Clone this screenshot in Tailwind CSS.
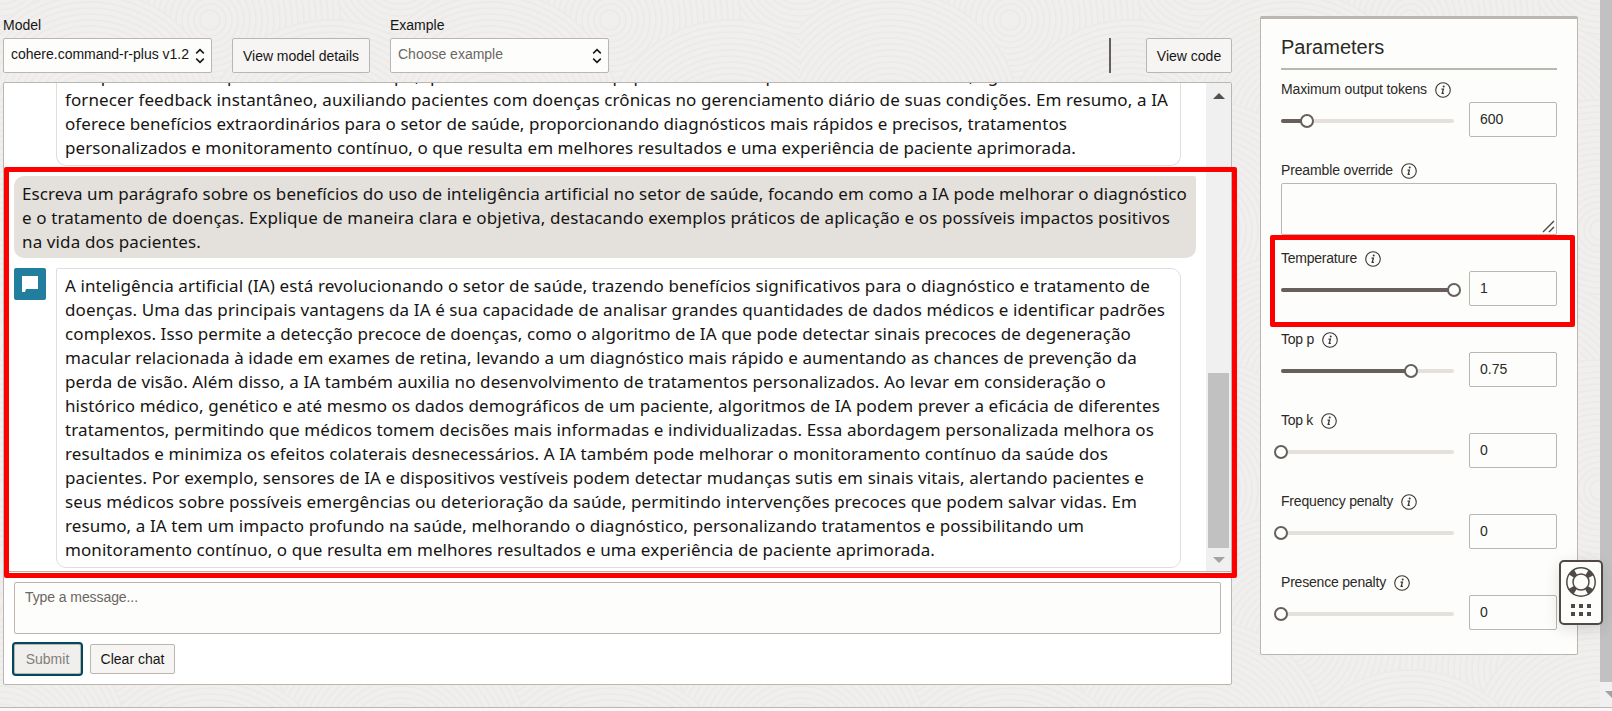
<!DOCTYPE html>
<html lang="pt">
<head>
<meta charset="utf-8">
<title>Playground</title>
<script src="https://cdn.jsdelivr.net/npm/@tailwindcss/browser@4"></script>
</head>
<body class="relative h-[711px] w-[1612px] overflow-hidden bg-[#efeeec] font-['Liberation_Sans',Arial,sans-serif] text-[14px] leading-4 text-[#161513]">
<svg class="absolute inset-0" width="1612" height="707" aria-hidden="true">
  <defs>
    <g id="rings" fill="#f0efed" stroke="#ebeae8" stroke-width="1.6">
      <circle r="130"/><circle r="124"/><circle r="118"/><circle r="112"/><circle r="106"/><circle r="100"/><circle r="94"/><circle r="88"/><circle r="82"/><circle r="76"/><circle r="70"/><circle r="64"/><circle r="58"/><circle r="52"/><circle r="46"/><circle r="40"/><circle r="34"/><circle r="28"/><circle r="22"/><circle r="16"/><circle r="10"/>
    </g>
    <pattern id="waves" width="400" height="260" patternUnits="userSpaceOnUse">
      <rect width="400" height="260" fill="#f0efed"/>
      <use href="#rings" x="0" y="-30"/><use href="#rings" x="400" y="-30"/><use href="#rings" x="210" y="20"/><use href="#rings" x="90" y="120"/><use href="#rings" x="330" y="150"/><use href="#rings" x="0" y="230"/><use href="#rings" x="400" y="230"/><use href="#rings" x="210" y="280"/>
    </pattern>
  </defs>
  <rect width="1612" height="707" fill="url(#waves)"/>
</svg>
<svg class="hidden">
  <symbol id="info" viewBox="0 0 16 16"><circle cx="8" cy="8" r="7.3" fill="none" stroke="#3a3632" stroke-width="1.1"/><circle cx="8.7" cy="4.6" r="1" fill="#3a3632"/><path d="M6.5 7.1h1.9L7.2 11.4h1.7" fill="none" stroke="#3a3632" stroke-width="1.3"/></symbol>
  <symbol id="updown" viewBox="0 0 10 16"><path d="M1.2 5.4 5 1.6l3.8 3.8M1.2 10.6 5 14.4l3.8-3.8" fill="none" stroke="#161513" stroke-width="1.5"/></symbol>
</svg>

<div class="relative flex h-[708px] border-b border-[#bcb6b1]">
  <main class="ml-[3px] mt-4 flex w-[1229px] flex-col">
    <div class="flex h-[57px] items-end">
      <div class="w-[209px]"><div class="mb-[5px]">Model</div>
        <div class="flex h-[35px] items-center justify-between rounded-[2px] border border-[#bcb6b1] bg-[#fdfdfb] pl-[7px] pr-[6px]"><span data-w="178" class="-mt-1 whitespace-nowrap">cohere.command-r-plus v1.2</span><svg width="10" height="16"><use href="#updown"/></svg></div></div>
      <div class="ml-5 flex h-[35px] w-[138px] items-center justify-center rounded-[2px] border border-[#bcb6b1] bg-[#f6f5f3]"><span data-w="116" class="whitespace-nowrap">View model details</span></div>
      <div class="ml-5 w-[219px]"><div class="mb-[5px]">Example</div>
        <div class="flex h-[35px] items-center justify-between rounded-[2px] border border-[#bcb6b1] bg-[#fdfdfb] pl-[7px] pr-[6px] text-[#6b6764]"><span data-w="105" class="-mt-1 whitespace-nowrap">Choose example</span><svg width="10" height="16"><use href="#updown"/></svg></div></div>
      <div class="ml-auto h-[35px] w-[2px] bg-[#665f5b]"></div>
      <div class="ml-[35px] flex h-[35px] w-[86px] items-center justify-center rounded-[2px] border border-[#bcb6b1] bg-[#f6f5f3]">View code</div>
    </div>

    <section class="mt-[9px] flex h-[603px] flex-col rounded-[2px] border border-[#bcb6b1] bg-white">
      <div class="flex h-[489px] overflow-hidden border-b border-[#bcb6b1]">
        <div class="flex w-[1202px] flex-col pl-[10px] font-['Noto_Sans',sans-serif] text-[17px] leading-6">
          <div class="ml-[42px] flex h-[83px] w-[1125px] flex-col justify-end rounded-b-[10px] border border-t-0 border-[#e0dedc] pb-[5px] pl-2">
            <p data-w="994" class="w-max whitespace-nowrap">Os aplicativos da IA podem atuar no tempo, que em todos os casos populares dos campos e nos dados remotos, agindo ao</p>
            <p data-w="1103" class="w-max whitespace-nowrap">fornecer feedback instantâneo, auxiliando pacientes com doenças crônicas no gerenciamento diário de suas condições. Em resumo, a IA</p>
            <p data-w="1002" class="w-max whitespace-nowrap">oferece benefícios extraordinários para o setor de saúde, proporcionando diagnósticos mais rápidos e precisos, tratamentos</p>
            <p data-w="1011" class="w-max whitespace-nowrap">personalizados e monitoramento contínuo, o que resulta em melhores resultados e uma experiência de paciente aprimorada.</p>
          </div>
          <div class="mt-[10px] h-[82px] w-[1182px] rounded-[10px] rounded-tr-[2px] bg-[#e4e1dd] pl-2 pt-[6px]">
            <p data-w="1165" class="w-max whitespace-nowrap">Escreva um parágrafo sobre os benefícios do uso de inteligência artificial no setor de saúde, focando em como a IA pode melhorar o diagnóstico</p>
            <p data-w="1148" class="w-max whitespace-nowrap">e o tratamento de doenças. Explique de maneira clara e objetiva, destacando exemplos práticos de aplicação e os possíveis impactos positivos</p>
            <p data-w="179" class="w-max whitespace-nowrap">na vida dos pacientes.</p>
          </div>
          <div class="mt-[10px] flex">
            <div class="flex h-8 w-8 items-center justify-center rounded-[2px] bg-[#227e9e]"><svg width="18" height="18"><path d="M1 1h16v13H5l-1 3H1z" fill="#fff"/></svg></div>
            <div class="ml-[10px] h-[300px] w-[1125px] rounded-[10px] rounded-tl-[2px] border border-[#e0dedc] pl-2 pt-[5px]">
              <p data-w="1085" class="w-max whitespace-nowrap">A inteligência artificial (IA) está revolucionando o setor de saúde, trazendo benefícios significativos para o diagnóstico e tratamento de</p>
              <p data-w="1100" class="w-max whitespace-nowrap">doenças. Uma das principais vantagens da IA é sua capacidade de analisar grandes quantidades de dados médicos e identificar padrões</p>
              <p data-w="1066" class="w-max whitespace-nowrap">complexos. Isso permite a detecção precoce de doenças, como o algoritmo de IA que pode detectar sinais precoces de degeneração</p>
              <p data-w="1072" class="w-max whitespace-nowrap">macular relacionada à idade em exames de retina, levando a um diagnóstico mais rápido e aumentando as chances de prevenção da</p>
              <p data-w="1041" class="w-max whitespace-nowrap">perda de visão. Além disso, a IA também auxilia no desenvolvimento de tratamentos personalizados. Ao levar em consideração o</p>
              <p data-w="1095" class="w-max whitespace-nowrap">histórico médico, genético e até mesmo os dados demográficos de um paciente, algoritmos de IA podem prever a eficácia de diferentes</p>
              <p data-w="1089" class="w-max whitespace-nowrap">tratamentos, permitindo que médicos tomem decisões mais informadas e individualizadas. Essa abordagem personalizada melhora os</p>
              <p data-w="1043" class="w-max whitespace-nowrap">resultados e minimiza os efeitos colaterais desnecessários. A IA também pode melhorar o monitoramento contínuo da saúde dos</p>
              <p data-w="1079" class="w-max whitespace-nowrap">pacientes. Por exemplo, sensores de IA e dispositivos vestíveis podem detectar mudanças sutis em sinais vitais, alertando pacientes e</p>
              <p data-w="1072" class="w-max whitespace-nowrap">seus médicos sobre possíveis emergências ou deterioração da saúde, permitindo intervenções precoces que podem salvar vidas. Em</p>
              <p data-w="1019" class="w-max whitespace-nowrap">resumo, a IA tem um impacto profundo na saúde, melhorando o diagnóstico, personalizando tratamentos e possibilitando um</p>
              <p data-w="870" class="w-max whitespace-nowrap">monitoramento contínuo, o que resulta em melhores resultados e uma experiência de paciente aprimorada.</p>
            </div>
          </div>
        </div>
        <div class="flex w-[25px] flex-col items-center bg-[#f0f0f0] pb-[8px] pt-[10px]">
          <svg width="12" height="6"><path d="M0 6 6 0l6 6z" fill="#505050"/></svg>
          <div class="mt-auto h-[175px] w-[21px] bg-[#c1c1c1]"></div>
          <svg class="mt-[9px]" width="12" height="6"><path d="M0 0h12L6 6z" fill="#a3a3a3"/></svg>
        </div>
      </div>
      <div class="ml-[10px] mt-[10px] h-[52px] w-[1207px] rounded-[2px] border border-[#bcb6b1] bg-[#fdfdfb] pl-[10px] pt-[6px] text-[#6b6764]"><span data-w="113" class="whitespace-nowrap">Type a message...</span></div>
      <div class="ml-[10px] mt-[10px] flex">
        <div class="flex h-[30px] w-[67px] items-center justify-center rounded-[2px] border border-[#bcb6b1] bg-[#f1efed] text-[#827e7b] outline-2 outline-[#00485e]">Submit</div>
        <div class="ml-[9px] flex h-[30px] w-[85px] items-center justify-center rounded-[2px] border border-[#bcb6b1] bg-[#f6f5f3]">Clear chat</div>
      </div>
    </section>
  </main>

  <aside class="ml-7 mt-4 h-[639px] w-[318px] rounded-[2px] border border-t-[3px] border-[#bcb6b1] bg-[#fdfdfb] px-5 pt-[16px] text-[#2b2926]">
    <h2 class="h-[35px] border-b-2 border-[#bcb6b1] text-[20px] leading-6">Parameters</h2>
    <div class="mt-[11px] h-[81px]">
      <div class="flex h-4 items-center gap-2"><span data-w="146" class="whitespace-nowrap">Maximum output tokens</span><svg class="mt-px" width="16" height="16"><use href="#info"/></svg></div>
      <div class="mt-[5px] flex h-[35px] items-center justify-between"><div class="relative mt-[3px] h-1 w-[173px] rounded bg-[#e4e1dd]"><div class="h-1 rounded bg-[#665f5b]" style="width:15%"></div><div class="absolute -top-[5px] -ml-[7px] h-[14px] w-[14px] rounded-full border-2 border-[#665f5b] bg-white" style="left:15%"></div></div><div class="h-[35px] w-[88px] rounded-[2px] border border-[#bcb6b1] pl-[10px] pt-[8px]">600</div></div>
    </div>
    <div class="h-[88px]">
      <div class="flex h-4 items-center gap-2"><span data-w="112" class="whitespace-nowrap">Preamble override</span><svg class="mt-px" width="16" height="16"><use href="#info"/></svg></div>
      <div class="mt-[5px] flex h-[52px] items-end justify-end rounded-[2px] border border-[#bcb6b1] p-px"><svg width="13" height="13"><path d="M1 12 12 1M7 12l5-5" stroke="#4b4742" stroke-width="1.4"/></svg></div>
    </div>
    <div class="h-[81px]">
      <div class="flex h-4 items-center gap-2"><span data-w="76" class="whitespace-nowrap">Temperature</span><svg class="mt-px" width="16" height="16"><use href="#info"/></svg></div>
      <div class="mt-[5px] flex h-[35px] items-center justify-between"><div class="relative mt-[3px] h-1 w-[173px] rounded bg-[#e4e1dd]"><div class="h-1 rounded bg-[#665f5b]" style="width:100%"></div><div class="absolute -top-[5px] -ml-[7px] h-[14px] w-[14px] rounded-full border-2 border-[#665f5b] bg-white" style="left:100%"></div></div><div class="h-[35px] w-[88px] rounded-[2px] border border-[#bcb6b1] pl-[10px] pt-[8px]">1</div></div>
    </div>
    <div class="h-[81px]">
      <div class="flex h-4 items-center gap-2"><span data-w="33" class="whitespace-nowrap">Top p</span><svg class="mt-px" width="16" height="16"><use href="#info"/></svg></div>
      <div class="mt-[5px] flex h-[35px] items-center justify-between"><div class="relative mt-[3px] h-1 w-[173px] rounded bg-[#e4e1dd]"><div class="h-1 rounded bg-[#665f5b]" style="width:75%"></div><div class="absolute -top-[5px] -ml-[7px] h-[14px] w-[14px] rounded-full border-2 border-[#665f5b] bg-white" style="left:75%"></div></div><div class="h-[35px] w-[88px] rounded-[2px] border border-[#bcb6b1] pl-[10px] pt-[8px]">0.75</div></div>
    </div>
    <div class="h-[81px]">
      <div class="flex h-4 items-center gap-2"><span data-w="32" class="whitespace-nowrap">Top k</span><svg class="mt-px" width="16" height="16"><use href="#info"/></svg></div>
      <div class="mt-[5px] flex h-[35px] items-center justify-between"><div class="relative mt-[3px] h-1 w-[173px] rounded bg-[#e4e1dd]"><div class="absolute -top-[5px] -ml-[7px] h-[14px] w-[14px] rounded-full border-2 border-[#665f5b] bg-white" style="left:0%"></div></div><div class="h-[35px] w-[88px] rounded-[2px] border border-[#bcb6b1] pl-[10px] pt-[8px]">0</div></div>
    </div>
    <div class="h-[81px]">
      <div class="flex h-4 items-center gap-2"><span data-w="112" class="whitespace-nowrap">Frequency penalty</span><svg class="mt-px" width="16" height="16"><use href="#info"/></svg></div>
      <div class="mt-[5px] flex h-[35px] items-center justify-between"><div class="relative mt-[3px] h-1 w-[173px] rounded bg-[#e4e1dd]"><div class="absolute -top-[5px] -ml-[7px] h-[14px] w-[14px] rounded-full border-2 border-[#665f5b] bg-white" style="left:0%"></div></div><div class="h-[35px] w-[88px] rounded-[2px] border border-[#bcb6b1] pl-[10px] pt-[8px]">0</div></div>
    </div>
    <div class="h-[81px]">
      <div class="flex h-4 items-center gap-2"><span data-w="105" class="whitespace-nowrap">Presence penalty</span><svg class="mt-px" width="16" height="16"><use href="#info"/></svg></div>
      <div class="mt-[5px] flex h-[35px] items-center justify-between"><div class="relative mt-[3px] h-1 w-[173px] rounded bg-[#e4e1dd]"><div class="absolute -top-[5px] -ml-[7px] h-[14px] w-[14px] rounded-full border-2 border-[#665f5b] bg-white" style="left:0%"></div></div><div class="h-[35px] w-[88px] rounded-[2px] border border-[#bcb6b1] pl-[10px] pt-[8px]">0</div></div>
    </div>
  </aside>

  <div class="ml-auto flex w-3 flex-col bg-[#f0f0f0]"><div class="h-[682px] bg-[#c1c1c1]"></div><svg class="ml-[5px] mt-[9px]" width="7" height="7"><path d="M0 0h14L7 7z" fill="#a3a3a3"/></svg></div>
</div>
<div class="h-[3px] bg-[#fbf9f8]"></div>

<div class="absolute left-[4px] top-[167px] h-[411px] w-[1233px] rounded-[2px] border-5 border-[#ff0000]"></div>
<div class="absolute left-[1270px] top-[235px] h-[92px] w-[305px] rounded-[2px] border-5 border-[#ff0000]"></div>

<div class="absolute left-[1559px] top-[560px] flex h-[65px] w-[44px] flex-col items-center rounded-[5px] border-2 border-[#4f4a46] bg-[#fdfdfb] pt-[5px] shadow-[0_4px_16px_rgba(0,0,0,0.12)]">
  <svg width="30" height="30"><g fill="none" stroke="#4f4a46"><circle cx="15" cy="15" r="11.2" stroke-width="7" stroke-dasharray="5.6 11.99" stroke-dashoffset="-6"/><circle cx="15" cy="15" r="14.2" stroke-width="1.5"/><circle cx="15" cy="15" r="8" stroke-width="1.5"/></g></svg>
  <svg class="mt-[7px]" width="20" height="12" fill="#4f4a46"><path d="M0 0h4v4H0zM8 0h4v4H8zM16 0h4v4h-4zM0 8h4v4H0zM8 8h4v4H8zM16 8h4v4h-4z"/></svg>
</div>

<script>
  function fit() {
    document.querySelectorAll('[data-w]').forEach(function (el) {
      el.style.letterSpacing = '0px';
      var r = document.createRange();
      r.selectNodeContents(el);
      el.style.letterSpacing = (el.dataset.w - r.getBoundingClientRect().width) / el.textContent.length + 'px';
    });
  }
  fit();
  window.addEventListener('load', fit);
  new ResizeObserver(fit).observe(document.querySelector('main'));
</script>
</body>
</html>
